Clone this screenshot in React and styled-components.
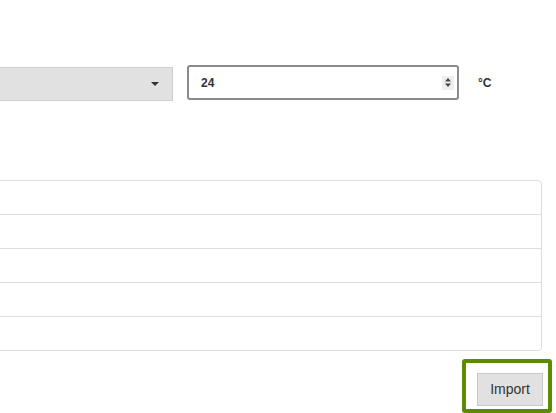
import React from 'react'
import styled, { createGlobalStyle } from 'styled-components'

const GlobalStyle = createGlobalStyle`
  html, body {
    margin: 0;
    padding: 0;
    background: #fff;
    overflow: hidden;
  }
  body {
    font-family: "Liberation Sans", Arial, sans-serif;
    color: #333;
  }
`

const Page = styled.div`
  width: 556px;
  height: 413px;
  overflow: hidden;
`

const Content = styled.div`
  margin-left: -120px;
  width: 662px;
  padding-top: 65px;
  display: flex;
  flex-direction: column;
`

const FieldRow = styled.div`
  display: flex;
  align-items: center;
  height: 35px;
`

const Select = styled.div`
  box-sizing: border-box;
  width: 293px;
  height: 34px;
  margin-top: 2px;
  background: #e1e1e1;
  border: 1px solid #cfcfcf;
  display: flex;
  align-items: center;
  justify-content: flex-end;
  padding-right: 13px;
`

const Caret = styled.span`
  width: 0;
  height: 0;
  border-left: 4px solid transparent;
  border-right: 4px solid transparent;
  border-top: 4px solid #333;
`

const NumberBox = styled.div`
  box-sizing: border-box;
  width: 272px;
  height: 35px;
  margin-left: 14px;
  border: 2px solid #8a8a8a;
  border-radius: 3px;
  display: flex;
  align-items: center;
  justify-content: space-between;
  padding: 0 3px 0 12px;
  font-size: 12px;
  font-weight: bold;
  color: #333;
`

const Spinner = styled.span`
  width: 12px;
  height: 14px;
  background: #eeeeee;
  display: flex;
  align-items: center;
  justify-content: center;
`

const Unit = styled.span`
  margin-left: 19px;
  font-size: 12px;
  font-weight: bold;
  color: #333;
`

const Table = styled.div`
  margin-top: 80px;
  width: 662px;
  border: 1px solid #dddddd;
  border-radius: 4px;
  box-sizing: border-box;
`

const Row = styled.div`
  height: 33px;
  border-top: 1px solid #dddddd;
  &:first-child {
    border-top: none;
  }
`

const Footer = styled.div`
  display: flex;
  justify-content: flex-end;
  margin-top: 8px;
  margin-right: -10px;
`

const FocusRing = styled.div`
  box-sizing: border-box;
  width: 90px;
  height: 54px;
  border: 4px solid #5c8a00;
  border-radius: 3px;
  display: flex;
  align-items: center;
  justify-content: center;
  padding: 6px 0 0 6px;
`

const Button = styled.button`
  box-sizing: border-box;
  width: 66px;
  height: 33px;
  background: #e1e1e1;
  border: 1px solid #c8c8c8;
  font-family: "Liberation Sans", Arial, sans-serif;
  font-size: 14px;
  color: #333;
  padding: 0;
`

export default function App() {
  return (
    <Page>
      <GlobalStyle />
      <Content>
        <FieldRow>
          <Select>
            <Caret />
          </Select>
          <NumberBox>
            24
            <Spinner>
              <svg width="6" height="9" viewBox="0 0 6 9">
                <path d="M3 0 L6 3.5 H0 Z M0 5.5 H6 L3 9 Z" fill="#444" />
              </svg>
            </Spinner>
          </NumberBox>
          <Unit>°C</Unit>
        </FieldRow>
        <Table>
          {[0, 1, 2, 3, 4].map(i => (
            <Row key={i} />
          ))}
        </Table>
        <Footer>
          <FocusRing>
            <Button>Import</Button>
          </FocusRing>
        </Footer>
      </Content>
    </Page>
  )
}
